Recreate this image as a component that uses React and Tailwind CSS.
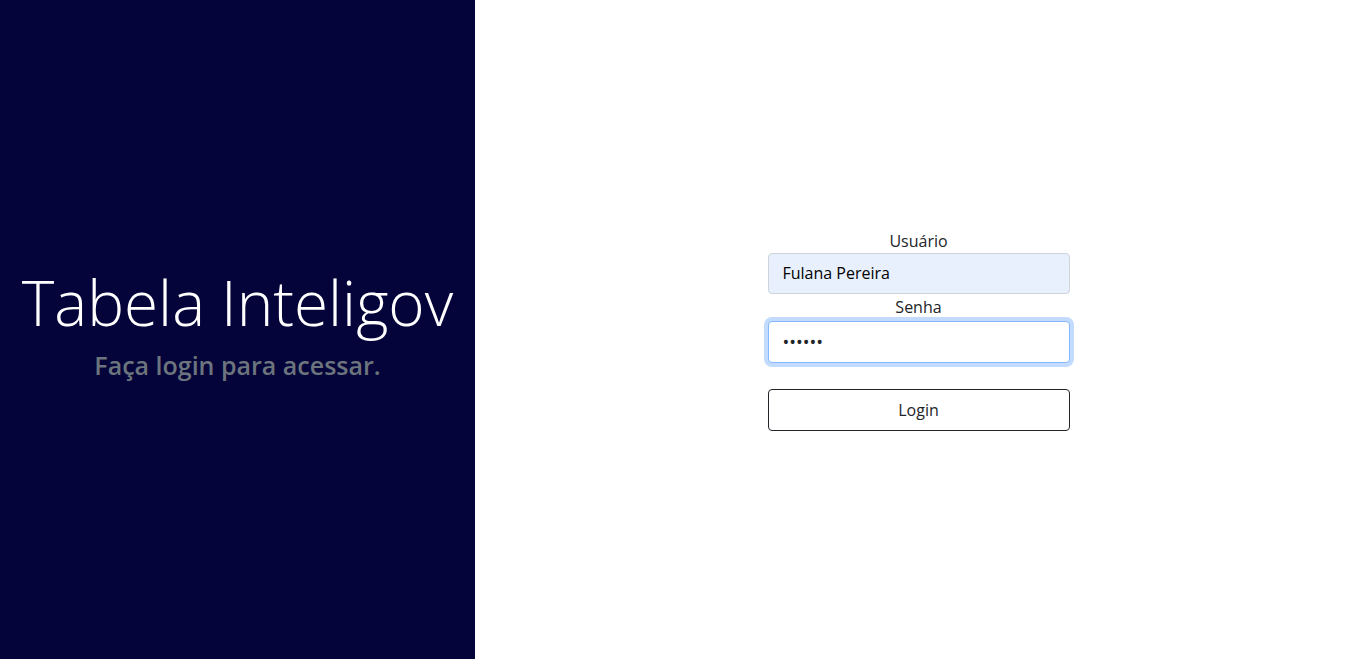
import React, { useState } from "react";

export default function App() {
  const [user, setUser] = useState("Fulana Pereira");
  const [pass, setPass] = useState("123456");

  return (
    <div className="flex h-[659px] w-full font-['Open_Sans',sans-serif]">
      <div className="w-[475px] shrink-0 bg-[#04043a] flex flex-col items-center justify-center pb-[14px]">
        <h1 className="text-[62px] font-light text-white leading-[1.2]">
          Tabela Inteligov
        </h1>
        <p className="text-[25px] font-semibold text-[#6c757d] leading-[1.2] mt-[11px]">
          Faça login para acessar.
        </p>
      </div>

      <div className="flex-1 bg-white flex items-center justify-center">
        <form className="w-[302px] flex flex-col text-[16px] text-[#212529] pt-[2px]">
          <label className="text-center leading-[24px] -mt-[2px]">Usuário</label>
          <input
            value={user}
            onChange={(e) => setUser(e.target.value)}
            className="h-[41px] w-full rounded-[4px] border border-[#ced4da] bg-[#e8f0fe] px-[14px] text-[16px] text-black outline-none"
          />
          <label className="text-center leading-[24px] mt-[1px]">Senha</label>
          <input
            type="password"
            value={pass}
            onChange={(e) => setPass(e.target.value)}
            className="mt-[2px] h-[42px] w-full rounded-[4px] border border-[#86b7fe] bg-white px-[14px] text-[18px] text-[#212529] outline-none shadow-[0_0_0_4px_rgba(13,110,253,0.25)]"
          />
          <button
            type="button"
            className="mt-[26px] h-[42px] w-full rounded-[4px] border border-[#212529] bg-white text-[16px] text-[#212529]"
          >
            Login
          </button>
        </form>
      </div>
    </div>
  );
}
